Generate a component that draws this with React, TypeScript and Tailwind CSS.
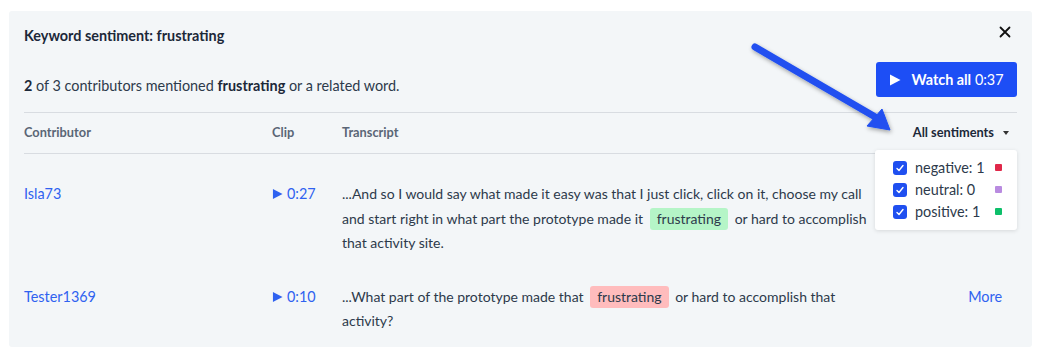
import React from "react";

const Hl = ({ color, children }: { color: string; children: React.ReactNode }) => (
  <span className={`${color} inline-block rounded-[3px] px-[7px] h-[22px] leading-[22px] mx-[3px] align-baseline`}>{children}</span>
);

const Play = ({ className }: { className?: string }) => (
  <svg viewBox="0 0 12 12" className={className} fill="currentColor">
    <path d="M1 0.5 L11.5 6 L1 11.5 Z" />
  </svg>
);

const Check = () => (
  <span className="w-[14px] h-[14px] rounded-[3px] bg-[#1f4ff0] flex items-center justify-center">
    <svg viewBox="0 0 14 14" className="w-[14px] h-[14px]" fill="none" stroke="white" strokeWidth="1.4" strokeLinecap="round" strokeLinejoin="round">
      <path d="M4 7.5 L6 9.5 L10 4.5" />
    </svg>
  </span>
);

export default function App() {
  return (
    <div className="w-[1041px] h-[362px] bg-white pt-[11px] pl-[9px]" style={{ fontFamily: "Lato, 'Liberation Sans', sans-serif" }}>
      <div className="relative w-[1023px] h-[336px] bg-[#f3f6f8] rounded-[3px] px-[15px] pt-[15px] text-[#2d3a4b]">
        <div className="flex items-center justify-between h-[20px]">
          <div className="text-[14.4px] font-bold text-[#1c2839]">Keyword sentiment: frustrating</div>
          <svg viewBox="0 0 12 12" className="w-[12px] h-[12px] mr-[6px] -mt-[8px]" stroke="#111" strokeWidth="1.8" strokeLinecap="round">
            <path d="M1.5 1.5 L10.5 10.5 M10.5 1.5 L1.5 10.5" />
          </svg>
        </div>
        <div className="flex items-end justify-between mt-[16px]">
          <div className="text-[14.4px] leading-[20px] mb-[1px]">
            <b className="text-[#1c2839]">2</b> of 3 contributors mentioned <b className="text-[#1c2839]">frustrating</b> or a related word.
          </div>
          <button className="h-[35px] w-[141px] bg-[#1d4ef5] rounded-[3px] text-white text-[14.4px] flex items-center justify-center gap-[10px]">
            <Play className="w-[12px] h-[12px]" />
            <span><b>Watch all</b> 0:37</span>
          </button>
        </div>
        <div className="mt-[15px] border-t border-[#d8dce1]" />
        <div className="grid grid-cols-[248px_70px_1fr_60px] h-[41px] items-center text-[12.8px] font-bold text-[#5a6676] border-b border-[#d8dce1]">
          <div>Contributor</div>
          <div>Clip</div>
          <div>Transcript</div>
          <div className="flex items-center justify-end gap-[9px] text-[#1c2839] -ml-[100px]">
            <span>All sentiments</span>
            <svg viewBox="0 0 6 4" className="w-[6px] h-[4px] mr-[8px]" fill="#333"><path d="M0 0 L6 0 L3 4 Z" /></svg>
          </div>
        </div>
        <div className="pt-[28px] flex flex-col gap-[29px] text-[14px] leading-[24.5px]">
          <div className="grid grid-cols-[248px_70px_545px_1fr]">
            <div className="text-[#2f62f0] text-[14.4px]">Isla73</div>
            <div className="text-[#2f62f0] text-[14.4px] flex items-center gap-[4px] h-[24.5px]">
              <Play className="w-[11px] h-[12px]" />
              <span>0:27</span>
            </div>
            <div>
              ...And so I would say what made it easy was that I just click, click on it, choose my call and start right in what part the prototype made it <Hl color="bg-[#b5f5c7]">frustrating</Hl> or hard to accomplish that activity site.
            </div>
            <div />
          </div>
          <div className="grid grid-cols-[248px_70px_545px_1fr]">
            <div className="text-[#2f62f0] text-[14.4px]">Tester1369</div>
            <div className="text-[#2f62f0] text-[14.4px] flex items-center gap-[4px] h-[24.5px]">
              <Play className="w-[11px] h-[12px]" />
              <span>0:10</span>
            </div>
            <div>
              ...What part of the prototype made that <Hl color="bg-[#ffbcbd]">frustrating</Hl> or hard to accomplish that activity?
            </div>
            <div className="text-[#2f62f0] text-[14.4px] text-right pr-[15px]">More</div>
          </div>
        </div>

        <div className="absolute left-[866px] top-[139px] w-[142px] h-[80px] bg-white rounded-[3px] shadow-[0_1px_4px_rgba(0,0,0,0.12)] pl-[18px] pr-[15px] pt-[10px] flex flex-col gap-[7px] text-[14.4px] text-[#2d3a4b]">
          {[
            ["negative: 1", "bg-[#e0284a]"],
            ["neutral: 0", "bg-[#b98be0]"],
            ["positive: 1", "bg-[#0dbf6a]"],
          ].map(([l, c]) => (
            <div key={l} className="flex items-center h-[15px]">
              <Check />
              <span className="ml-[8px] flex-1 leading-[15px]">{l}</span>
              <span className={`w-[7px] h-[7px] rounded-[1px] ${c}`} />
            </div>
          ))}
        </div>

        <svg className="absolute left-[730px] top-[25px] pointer-events-none" width="180" height="120" viewBox="0 0 180 120">
          <defs>
            <filter id="sh" x="-20%" y="-20%" width="140%" height="140%">
              <feDropShadow dx="1" dy="2" stdDev="1.5" floodColor="#000" floodOpacity="0.35" />
            </filter>
          </defs>
          <g filter="url(#sh)" fill="#2050f0" stroke="#2050f0">
            <path d="M16 11 L138 82" strokeWidth="7" strokeLinecap="round" fill="none" />
            <path d="M151 94 L128 90 L143 73 Z" strokeWidth="1" strokeLinejoin="round" />
          </g>
        </svg>
      </div>
    </div>
  );
}
